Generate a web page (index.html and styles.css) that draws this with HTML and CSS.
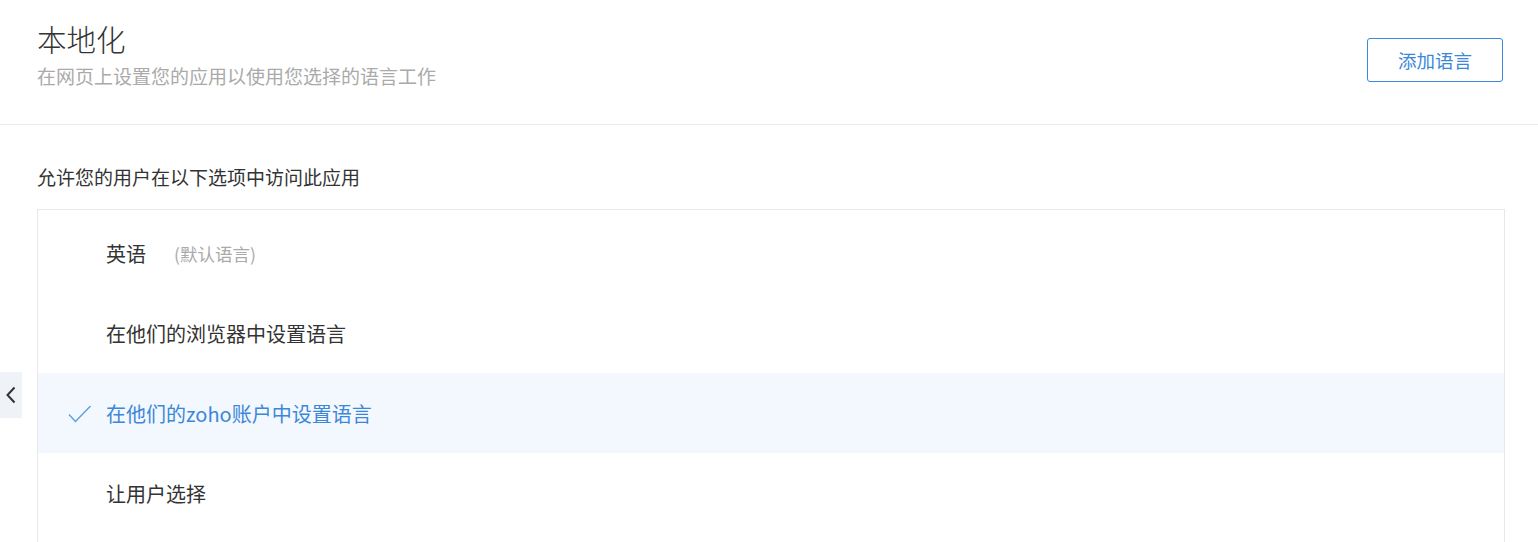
FILE: index.html
```html
<!DOCTYPE html>
<html lang="zh-CN">
  <head>
    <meta charset="UTF-8" />
    <meta name="viewport" content="width=device-width, initial-scale=1.0" />
    <title>本地化</title>
    <link rel="stylesheet" href="styles.css">
  </head>
  <body>
    <div class="page-header">
      <div class="heading">
        <h1>本地化</h1>
        <p class="subtitle">在网页上设置您的应用以使用您选择的语言工作</p>
      </div>
      <button type="button" class="add-btn">添加语言</button>
    </div>

    <div class="content">
      <p class="label">允许您的用户在以下选项中访问此应用</p>

      <ul class="options">
        <li class="option">
          <span class="tick"></span>
          <span>英语</span>
          <span class="note">(默认语言)</span>
        </li>
        <li class="option">
          <span class="tick"></span>
          <span>在他们的浏览器中设置语言</span>
        </li>
        <li class="option selected">
          <span class="tick">
            <svg width="24" height="18" viewBox="0 0 24 18">
              <path d="M1 9.5 L7.5 16.5 L22.5 1" fill="none" stroke="#5a9be3" stroke-width="1.3" />
            </svg>
          </span>
          <span>在他们的zoho账户中设置语言</span>
        </li>
        <li class="option">
          <span class="tick"></span>
          <span>让用户选择</span>
        </li>
      </ul>
    </div>

    <div class="back-tab">
      <svg width="12" height="18" viewBox="0 0 12 18">
        <path d="M9.5 1.5 L2.5 9 L9.5 16.5" fill="none" stroke="#333" stroke-width="2" />
      </svg>
    </div>
  </body>
</html>
```

FILE: styles.css
```css
body {
  margin: 0;
  font-family: "Noto Sans CJK SC", "Noto Sans", sans-serif;
  color: #333;
  background: #fff;
  overflow: hidden;
}
.page-header {
  display: flex;
  justify-content: space-between;
  align-items: flex-start;
  height: 125px;
  padding: 20px 35px 0 37px;
  box-sizing: border-box;
  border-bottom: 1px solid #ebebeb;
}
.page-header h1 {
  margin: 0;
  font-size: 29.5px;
  font-weight: 300;
  line-height: 36px;
  color: #333;
}
.subtitle {
  margin: 7px 0 0;
  font-size: 19px;
  line-height: 26px;
  color: #aaa;
}
.add-btn {
  margin-top: 18px;
  width: 136px;
  height: 44px;
  background: #fff;
  border: 1px solid #3c87d9;
  border-radius: 3px;
  color: #3c87d9;
  font-family: inherit;
  font-size: 18.5px;
  cursor: pointer;
}
.content {
  padding: 0 33px 0 37px;
}
.label {
  margin: 39px 0 19px;
  font-size: 19px;
  line-height: 26px;
}
.options {
  list-style: none;
  margin: 0;
  padding: 3px 0 40px;
  border: 1px solid #e8e8e8;
}
.option {
  display: flex;
  align-items: center;
  height: 80px;
  padding-left: 30px;
  font-size: 20px;
  color: #333;
}
.option.selected {
  background: #f3f8fe;
  color: #3d87d9;
}
.tick {
  display: flex;
  align-items: center;
  width: 38px;
  height: 20px;
  margin-top: 2px;
}
.note {
  margin-left: 28px;
  font-size: 17.5px;
  color: #aaa;
}
.back-tab {
  position: absolute;
  left: 0;
  top: 372px;
  width: 22px;
  height: 46px;
  background: #eff2f6;
  display: flex;
  align-items: center;
  justify-content: center;
}
```
